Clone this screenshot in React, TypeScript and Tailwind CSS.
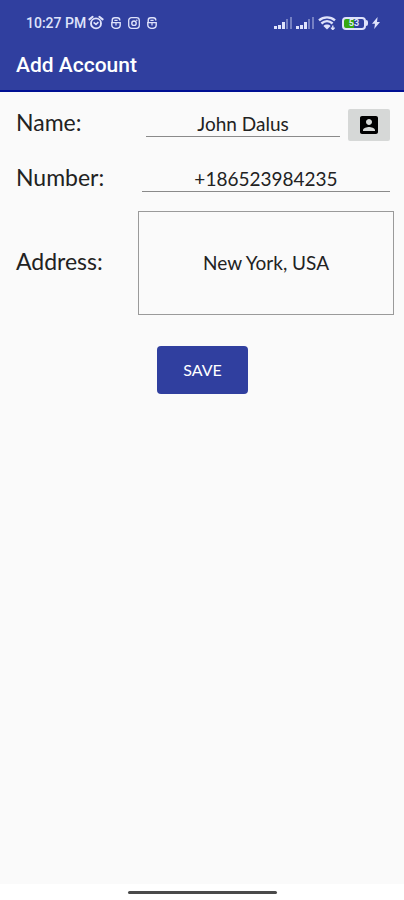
import React, { useState } from 'react';

// ============================================================================
// ICONS
// ============================================================================

const AlarmIcon: React.FC = () => (
  <svg className="h-4 w-4" viewBox="0 0 16 16" fill="none" stroke="currentColor" aria-hidden="true">
    <circle cx="8" cy="8.4" r="5" strokeWidth="1.9" />
    <path d="M1.4 4.4 4.6 1.8M14.6 4.4 11.4 1.8" strokeWidth="2" strokeLinecap="round" />
    <path d="M5.6 7.4 8 9.4l2.4-2.2" strokeWidth="1.6" />
  </svg>
);

const AppBadgeIcon: React.FC = () => (
  <svg className="h-3 w-3" viewBox="0 0 12 12" fill="none" stroke="currentColor" aria-hidden="true">
    <path d="M2.2 5.4V3.4C2.2 1.8 3.4.8 4.8.8h2.4c1.4 0 2.6 1 2.6 2.6" strokeWidth="1.4" />
    <path d="M1.8 5.6h8.4V8c0 2.2-1.8 3.400-4.200 3.400S1.800 10.200 1.800 8z" strokeWidth="1.4" />
    <path d="M4.4 3.400h3.200M6 6v2.600" strokeWidth="1.2" />
  </svg>
);

const CameraBadgeIcon: React.FC = () => (
  <svg className="h-3 w-3" viewBox="0 0 12 12" fill="none" stroke="currentColor" aria-hidden="true">
    <rect x="0.7" y="0.7" width="10.6" height="10.6" rx="2.8" strokeWidth="1.3" />
    <circle cx="6" cy="6.2" r="2.2" strokeWidth="1.4" />
    <circle cx="8.8" cy="3.2" r="0.8" fill="currentColor" stroke="none" />
  </svg>
);

const SignalIcon: React.FC = () => (
  <svg className="h-3 w-[18px]" viewBox="0 0 18 12" fill="currentColor" aria-hidden="true">
    <rect x="0" y="9" width="3" height="3" />
    <rect x="4" y="8" width="3" height="4" />
    <rect x="8" y="5" width="3" height="7" />
    <rect x="12" y="2" width="2" height="10" opacity="0.4" />
    <rect x="16" y="0" width="2" height="12" opacity="0.4" />
  </svg>
);

const WifiIcon: React.FC = () => (
  <svg className="h-[14px] w-[18px]" viewBox="0 0 18 14" fill="none" stroke="currentColor" aria-hidden="true">
    <path d="M1 4.4C5.6.4 12.4.4 17 4.4" strokeWidth="2.4" />
    <path d="M3.4 7.5c3.4-3 7.8-3 11.2 0" strokeWidth="2.4" />
    <path d="M5.4 9.9c2-1.8 5.2-1.8 7.2 0L9 13.6z" fill="currentColor" stroke="none" />
    <path d="M14.8 9.4v4.400M13 11.600l1.800 2 1.800-2" strokeWidth="1.4" />
  </svg>
);

const BoltIcon: React.FC = () => (
  <svg className="h-3 w-2" viewBox="0 0 8 12" fill="currentColor" aria-hidden="true">
    <path d="M5.6 0 0 6.8h3L2.2 12 8 5H5z" />
  </svg>
);

const ContactIcon: React.FC = () => (
  <svg className="h-6 w-6" viewBox="0 0 24 24" fill="currentColor" aria-hidden="true">
    <path d="M3 5v14c0 1.100.89 2 2 2h14c1.100 0 2-.9 2-2V5c0-1.100-.9-2-2-2H5c-1.110 0-2 .9-2 2zm12 4c0 1.660-1.340 3-3 3s-3-1.340-3-3 1.340-3 3-3 3 1.340 3 3zm-9 8c0-2 4-3.100 6-3.100s6 1.100 6 3.100v1H6v-1z" />
  </svg>
);

// ============================================================================
// STATUS BAR
// ============================================================================

const StatusBar: React.FC = () => (
  <div className="flex h-[46px] items-center justify-between pr-6 pl-[26px] text-[#dfe3fb]">
    <div className="flex items-center">
      <span className="text-sm font-medium">10:27 PM</span>
      <div className="ml-0.5 flex items-center gap-1.5">
        <AlarmIcon />
        <AppBadgeIcon />
        <CameraBadgeIcon />
        <AppBadgeIcon />
      </div>
    </div>
    <div className="flex items-center gap-1">
      <SignalIcon />
      <SignalIcon />
      <WifiIcon />
      <div className="ml-0.5 flex items-center">
        <div className="flex h-[13px] w-6 items-center justify-center rounded-[4px] border-2 border-[#dfe3fb] bg-linear-to-r from-[#36a813] from-50% to-[#30409f] to-50% text-[9px] leading-none font-bold">
          53
        </div>
        <div className="h-1.5 w-0.5 rounded-r-sm bg-[#dfe3fb]" />
      </div>
      <BoltIcon />
    </div>
  </div>
);

// ============================================================================
// SCREEN
// ============================================================================

const App: React.FC = () => {
  const [name, setName] = useState('John Dalus');
  const [number, setNumber] = useState('+186523984235');
  const [address, setAddress] = useState('New York, USA');

  return (
    <div className="flex min-h-screen flex-col bg-[#fafafa] font-['Lato',sans-serif] text-[#222222]">
      <header className="border-b-2 border-[#000f93] bg-[#303f9f] font-['Roboto',sans-serif]">
        <StatusBar />
        <h1 className="px-4 pt-[5px] pb-[11px] text-[21px] leading-7 font-medium text-white">
          Add Account
        </h1>
      </header>

      <form className="flex-1 pt-4 pl-4" onSubmit={(e) => e.preventDefault()}>
        <div className="flex h-[34px] items-center pr-[14px]">
          <label htmlFor="name" className="w-[130px] shrink-0 pb-1.5 text-[23px] leading-7">
            Name:
          </label>
          <input
            id="name"
            type="text"
            value={name}
            onChange={(e) => setName(e.target.value)}
            className="mb-1 h-7 min-w-0 flex-1 border-b border-[#8a8a8a] pt-[3px] text-center text-[19px] outline-none"
          />
          <button
            type="button"
            aria-label="Pick from contacts"
            className="ml-2 flex h-8 w-[42px] shrink-0 items-center justify-center rounded-xs bg-[#d6d8d7] text-black"
          >
            <ContactIcon />
          </button>
        </div>

        <div className="mt-[21px] flex h-[34px] items-center pr-[14px]">
          <label htmlFor="number" className="w-[126px] shrink-0 pb-1.5 text-[23px] leading-7">
            Number:
          </label>
          <input
            id="number"
            type="tel"
            value={number}
            onChange={(e) => setNumber(e.target.value)}
            className="mb-1 h-7 min-w-0 flex-1 border-b border-[#8a8a8a] pt-[3px] text-center text-[19px] outline-none"
          />
        </div>

        <div className="mt-3.5 flex items-center pr-2.5">
          <label htmlFor="address" className="w-[122px] shrink-0 pb-1 text-[23px] leading-7">
            Address:
          </label>
          <textarea
            id="address"
            rows={1}
            value={address}
            onChange={(e) => setAddress(e.target.value)}
            className="min-w-0 flex-1 resize-none border border-[#9a9a9a] py-[37px] text-center text-[19px] leading-7 outline-none"
          />
        </div>

        <div className="mt-[31px] flex justify-center pr-[15px]">
          <button
            type="submit"
            className="h-12 w-[91px] rounded-sm bg-[#303f9f] text-base text-white"
          >
            SAVE
          </button>
        </div>
      </form>

      <footer className="flex h-4 items-center justify-center bg-white">
        <div className="h-[3px] w-[149px] rounded-full bg-[#4a4a4a]" />
      </footer>
    </div>
  );
};

export default App;
